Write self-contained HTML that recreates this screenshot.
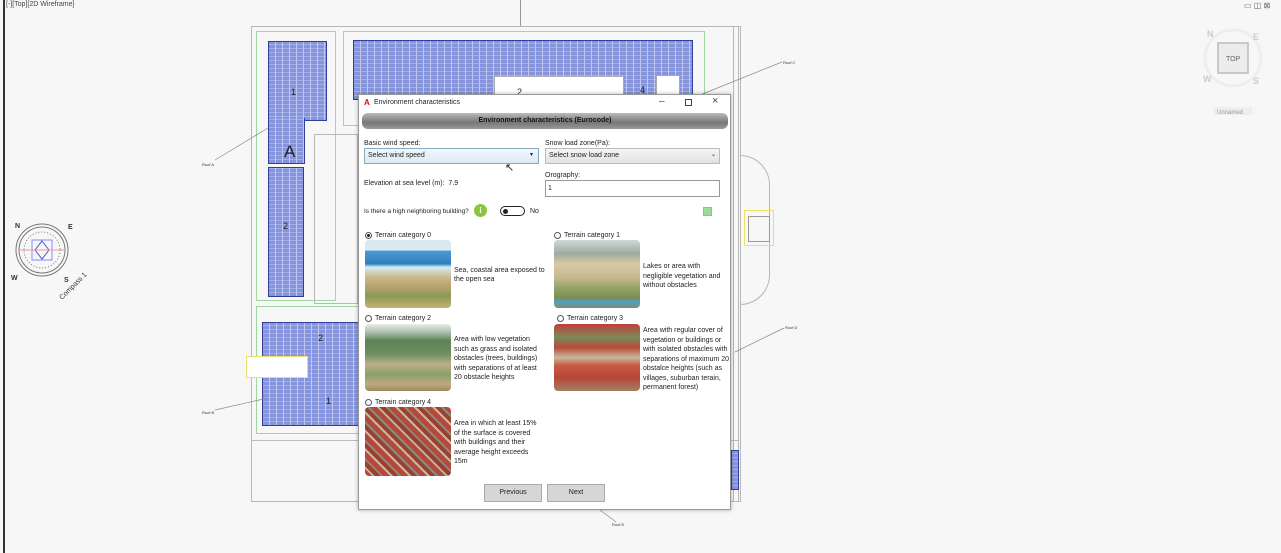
<!DOCTYPE html>
<html><head><meta charset="utf-8"><style>
*{margin:0;padding:0;box-sizing:border-box}
body{width:1281px;height:553px;overflow:hidden;background:#f7f7f7;font-family:"Liberation Sans",sans-serif;position:relative}
.a{position:absolute}
.grid{position:absolute;background-color:#8594dc;background-image:repeating-linear-gradient(90deg,transparent 0 6px,#c0c8f0 6px 7px),repeating-linear-gradient(0deg,transparent 0 3px,#a4afe8 3px 4px);border:1.5px solid #2f3f9a}
.ln{position:absolute;border:1px solid #b8b8b8}
.gr{position:absolute;border:1px solid #9fd79f}
.t{font-size:7px;color:#222;position:absolute;white-space:nowrap}
.img{position:absolute;border-radius:4px;overflow:hidden}
.btn{position:absolute;background:#d6d6d6;border:1px solid #aaa;font-size:7px;text-align:center;line-height:16px;color:#222}
.rad{position:absolute;width:7px;height:7px;border:1px solid #555;border-radius:50%;background:#fff}
</style></head><body>
<div class="a" style="left:3px;top:0;width:2px;height:553px;background:#333"></div>
<div class="t" style="left:6px;top:1px;font-size:7px;color:#444">[-][Top][2D Wireframe]</div>
<div class="t" style="left:1244px;top:1px;font-size:8px;color:#666">▭ ◫ ⊠</div>
<div class="a" style="left:520px;top:0;width:1px;height:26px;background:#999"></div>
<div class="ln" style="left:251px;top:26px;width:488px;height:476px"></div>
<div class="ln" style="left:251px;top:440px;width:488px;height:62px;border-top:1px solid #bbb"></div>
<div class="gr" style="left:256px;top:31px;width:80px;height:270px"></div>
<div class="gr" style="left:343px;top:31px;width:362px;height:95px"></div>
<div class="gr" style="left:256px;top:306px;width:110px;height:128px"></div>
<div class="ln" style="left:314px;top:134px;width:44px;height:170px"></div>
<div class="ln" style="left:733px;top:26px;width:8px;height:476px"></div>
<div class="ln" style="left:740px;top:155px;width:30px;height:150px;border-radius:0 30px 30px 0"></div>
<div class="a" style="left:744px;top:210px;width:30px;height:36px;border:1px solid #f0e060"></div>
<div class="a" style="left:748px;top:216px;width:22px;height:26px;border:1px solid #999"></div>
<div class="grid" style="left:268px;top:41px;width:59px;height:80px"></div>
<div class="grid" style="left:268px;top:118px;width:37px;height:46px;border-top:none"></div>
<div class="grid" style="left:268px;top:167px;width:36px;height:130px"></div>
<div class="grid" style="left:353px;top:40px;width:340px;height:60px"></div>
<div class="a" style="left:494px;top:76px;width:130px;height:24px;background:#fff;border:1px solid #aaa"></div>
<div class="a" style="left:656px;top:75px;width:24px;height:24px;background:#fff;border:1px solid #aaa"></div>
<div class="grid" style="left:262px;top:322px;width:100px;height:104px"></div>
<div class="a" style="left:246px;top:356px;width:62px;height:22px;background:#fff;border:1px solid #e8e070"></div>
<div class="grid" style="left:731px;top:450px;width:8px;height:40px"></div>
<div class="t" style="left:291px;top:87px;font-size:9px">1</div>
<div class="t" style="left:284px;top:142px;font-size:17px">A</div>
<div class="t" style="left:283px;top:221px;font-size:9px">2</div>
<div class="t" style="left:318px;top:333px;font-size:9px">2</div>
<div class="t" style="left:326px;top:396px;font-size:9px">1</div>
<div class="t" style="left:640px;top:85px;font-size:9px">4</div>
<div class="t" style="left:517px;top:87px;font-size:9px">2</div>
<svg class="a" style="left:0;top:0" width="1281" height="553"><g stroke="#888" stroke-width="0.7" fill="none">
<line x1="215" y1="160" x2="268" y2="128"/><line x1="215" y1="410" x2="268" y2="398"/>
<line x1="700" y1="95" x2="782" y2="62"/><line x1="735" y1="352" x2="784" y2="328"/>
<line x1="600" y1="510" x2="616" y2="522"/></g>
<g font-size="4" fill="#333" font-family="Liberation Sans"><text x="202" y="166">Roof A</text><text x="202" y="414">Roof B</text><text x="783" y="64">Roof C</text><text x="785" y="329">Roof D</text><text x="612" y="526">Roof E</text></g>
<g transform="translate(42,250)" stroke="#777" fill="none"><circle r="26"/><circle r="23"/><circle r="18" stroke-dasharray="1 2"/><rect x="-10" y="-10" width="20" height="20" stroke="#88f"/><path d="M0 -9 L7 0 L0 9 L-7 0Z" stroke="#55c"/><line x1="-22" y1="0" x2="22" y2="0" stroke="#e99"/></g>
<g font-size="7" fill="#333" font-weight="bold"><text x="15" y="228">N</text><text x="68" y="229">E</text><text x="11" y="280">W</text><text x="64" y="282">S</text></g>
<text x="62" y="300" font-size="7" fill="#333" transform="rotate(-45 62 300)">Compass 1</text>
<circle cx="1233" cy="58" r="28" fill="none" stroke="#eee" stroke-width="3"/>
<rect x="1218" y="43" width="30" height="30" fill="#ececec" stroke="#bbb" stroke-width="1.5"/>
<text x="1226" y="61" font-size="7" fill="#666">TOP</text>
<g font-size="9" fill="#ccc" font-weight="bold"><text x="1207" y="37">N</text><text x="1253" y="40">E</text><text x="1203" y="82">W</text><text x="1253" y="84">S</text></g>
<rect x="1214" y="107" width="38" height="8" fill="#eee"/><text x="1217" y="114" font-size="6" fill="#999">Unnamed</text>
</svg>
<div class="a" style="left:358px;top:94px;width:373px;height:416px;background:#fff;border:1px solid #999;box-shadow:0 0 4px rgba(0,0,0,.3)">
<div class="t" style="left:5px;top:3px;font-size:8px;color:#d11;font-weight:bold">A</div>
<div class="t" style="left:15px;top:4px;font-size:7px">Environment characteristics</div>
<div class="t" style="left:300px;top:1px;font-size:10px;color:#444">–</div>
<div class="a" style="left:326px;top:4px;width:7px;height:7px;border:1px solid #444"></div>
<div class="t" style="left:353px;top:0px;font-size:11px;color:#444">×</div>
<div class="a" style="left:3px;top:18px;width:366px;height:16px;border-radius:6px;background:linear-gradient(#bbb,#777 60%,#999);text-align:center;font-size:7px;font-weight:bold;line-height:16px;color:#111">Environment characteristics (Eurocode)</div>
<div class="t" style="left:5px;top:45px">Basic wind speed:</div>
<div class="a" style="left:5px;top:53px;width:175px;height:16px;border:1px solid #8ab;background:linear-gradient(#f2f8fd,#dce9f4)"></div>
<div class="t" style="left:9px;top:57px">Select wind speed</div><div class="t" style="left:171px;top:56px;font-size:6px">▾</div>
<div class="t" style="left:186px;top:45px">Snow load zone(Pa):</div>
<div class="a" style="left:186px;top:53px;width:175px;height:16px;border:1px solid #bbb;background:linear-gradient(#f5f5f5,#e2e2e2)"></div>
<div class="t" style="left:190px;top:57px">Select snow load zone</div><div class="t" style="left:352px;top:56px;font-size:6px">⌄</div>
<div class="t" style="left:146px;top:66px;font-size:11px">↖</div>
<div class="t" style="left:186px;top:77px">Orography:</div>
<div class="a" style="left:186px;top:85px;width:175px;height:17px;border:1px solid #999"></div>
<div class="t" style="left:189px;top:90px">1</div>
<div class="t" style="left:5px;top:85px">Elevation at sea level (m):&nbsp; 7.9</div>
<div class="t" style="left:5px;top:113px;font-size:6.5px">Is there a high neighboring building?</div>
<div class="a" style="left:115px;top:109px;width:13px;height:13px;border-radius:50%;background:#8bc43f;color:#fff;font-size:8px;text-align:center;line-height:13px;font-weight:bold">i</div>
<div class="a" style="left:141px;top:111px;width:25px;height:10px;border:1.5px solid #222;border-radius:6px"></div>
<div class="a" style="left:144px;top:114px;width:5px;height:5px;border-radius:50%;background:#222"></div>
<div class="t" style="left:171px;top:113px">No</div>
<div class="a" style="left:344px;top:112px;width:9px;height:9px;background:#9d9;border:1px solid #7c7"></div>
<div class="rad" style="left:6px;top:137px"></div><div class="a" style="left:8px;top:139px;width:3px;height:3px;border-radius:50%;background:#222"></div>
<div class="t" style="left:16px;top:137px">Terrain category 0</div>
<div class="img" style="left:6px;top:145px;width:86px;height:68px;background:linear-gradient(#d9e9f1 0,#d9e9f1 15%,#4a9bd0 16%,#2f7fc0 35%,#d8ecf2 40%,#c9b98a 55%,#b6a06a 70%,#8a9a55 82%,#c8b070 100%)"></div>
<div class="t" style="left:95px;top:171px;line-height:9px">Sea, coastal area exposed to<br>the open sea</div>
<div class="rad" style="left:195px;top:137px"></div>
<div class="t" style="left:205px;top:137px">Terrain category 1</div>
<div class="img" style="left:195px;top:145px;width:86px;height:68px;background:linear-gradient(#cfd8d8 0,#9eaaa0 20%,#d8c9a4 35%,#c8b890 55%,#94a468 70%,#7a8d56 85%,#4fa0c8 92%,#8a8a60 100%)"></div>
<div class="t" style="left:284px;top:167px;line-height:9.5px">Lakes or area with<br>negligible vegetation and<br>without obstacles</div>
<div class="rad" style="left:6px;top:220px"></div>
<div class="t" style="left:16px;top:220px">Terrain category 2</div>
<div class="img" style="left:6px;top:229px;width:86px;height:67px;background:linear-gradient(#e8eee8 0,#b0c0b0 12%,#5d8256 25%,#6e9060 45%,#bcae88 60%,#8aa06a 75%,#c0a880 90%,#9a8a60 100%)"></div>
<div class="t" style="left:95px;top:240px;line-height:9.5px">Area with low vegetation<br>such as grass and isolated<br>obstacles (trees, buildings)<br>with separations of at least<br>20 obstacle heights</div>
<div class="rad" style="left:198px;top:220px"></div>
<div class="t" style="left:208px;top:220px">Terrain category 3</div>
<div class="img" style="left:195px;top:229px;width:86px;height:67px;background:linear-gradient(#c0403a 0,#7a8a5a 20%,#b84a3a 35%,#c8b8a0 50%,#c85a40 62%,#b8463a 80%,#a08060 100%)"></div>
<div class="t" style="left:284px;top:231px;line-height:9.5px">Area with regular cover of<br>vegetation or buildings or<br>with isolated obstacles with<br>separations of maximum 20<br>obstalce heights (such as<br>villages, suburban terain,<br>permanent forest)</div>
<div class="rad" style="left:6px;top:304px"></div>
<div class="t" style="left:16px;top:304px">Terrain category 4</div>
<div class="img" style="left:6px;top:312px;width:86px;height:69px;background:repeating-linear-gradient(45deg,#b5483a 0 5px,#c8b8a0 5px 7px,#9a4030 7px 11px,#8a8a80 11px 13px)"></div>
<div class="t" style="left:95px;top:324px;line-height:9.5px">Area in which at least 15%<br>of the surface is covered<br>with buildings and their<br>average height exceeds<br>15m</div>
<div class="btn" style="left:125px;top:389px;width:58px;height:18px">Previous</div>
<div class="btn" style="left:188px;top:389px;width:58px;height:18px">Next</div>
</div>
</body></html>
